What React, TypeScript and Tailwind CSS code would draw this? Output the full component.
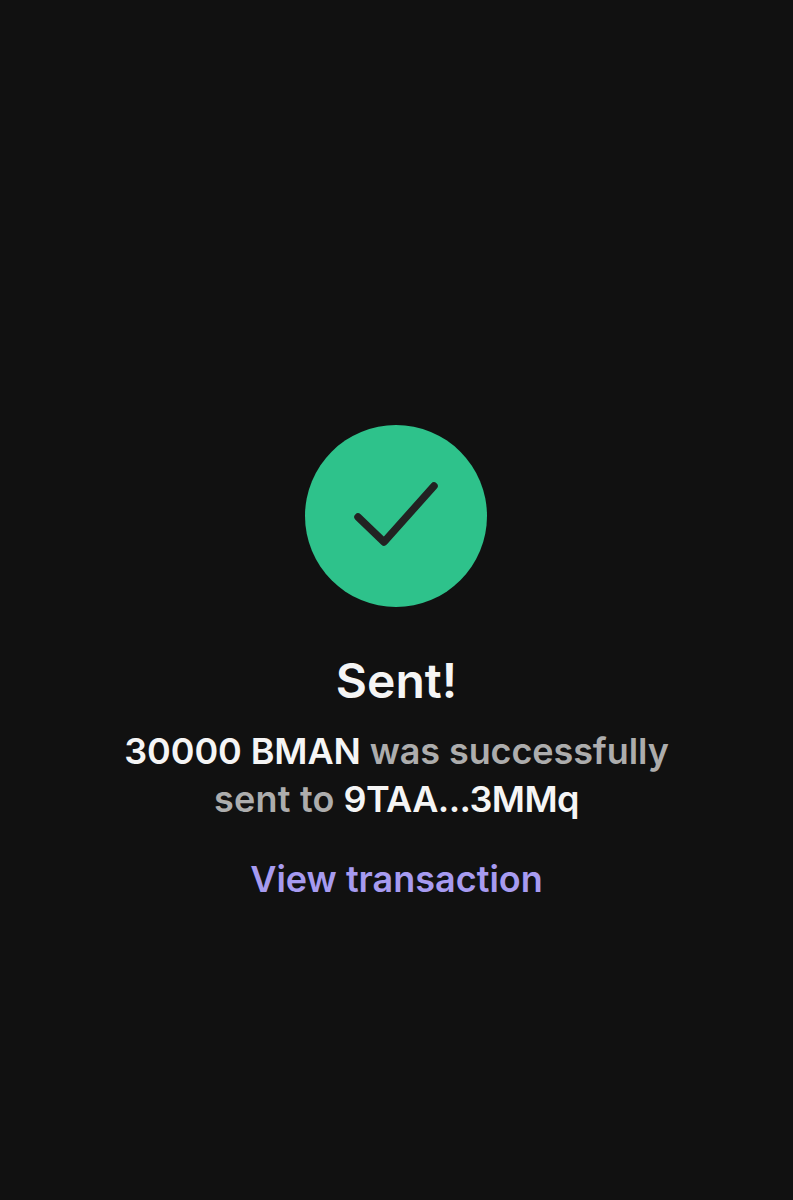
export default function App() {
  return (
    <div className="flex h-[1200px] w-full flex-col items-center bg-[#111111] pt-[425px] font-['Inter',sans-serif]">
      <div className="mr-[1px] flex h-[182px] w-[182px] items-center justify-center rounded-full bg-[#2ec28b]">
        <svg width="182" height="182" viewBox="0 0 182 182" fill="none">
          <path d="M53 92 L79 117 L129 61" stroke="#222222" strokeWidth="7.5" strokeLinecap="round" strokeLinejoin="round" />
        </svg>
      </div>
      <h1 className="mt-[44px] text-[48px] leading-[60px] font-semibold text-[#f5f5f5]">Sent!</h1>
      <p className="mt-[16px] w-[600px] text-center text-[36px] leading-[48px] font-semibold tracking-[-0.1px] text-[#adadad]">
        <span className="text-[#f5f5f5]">30000 BMAN</span> was successfully
        <br />
        <span className="tracking-[0.2px]">sent to</span> <span className="tracking-[-0.6px] text-[#f5f5f5]">9TAA...3MMq</span>
      </p>
      <a className="mt-[32px] text-[36px] leading-[48px] font-semibold text-[#a79bf0]">View transaction</a>
    </div>
  );
}
